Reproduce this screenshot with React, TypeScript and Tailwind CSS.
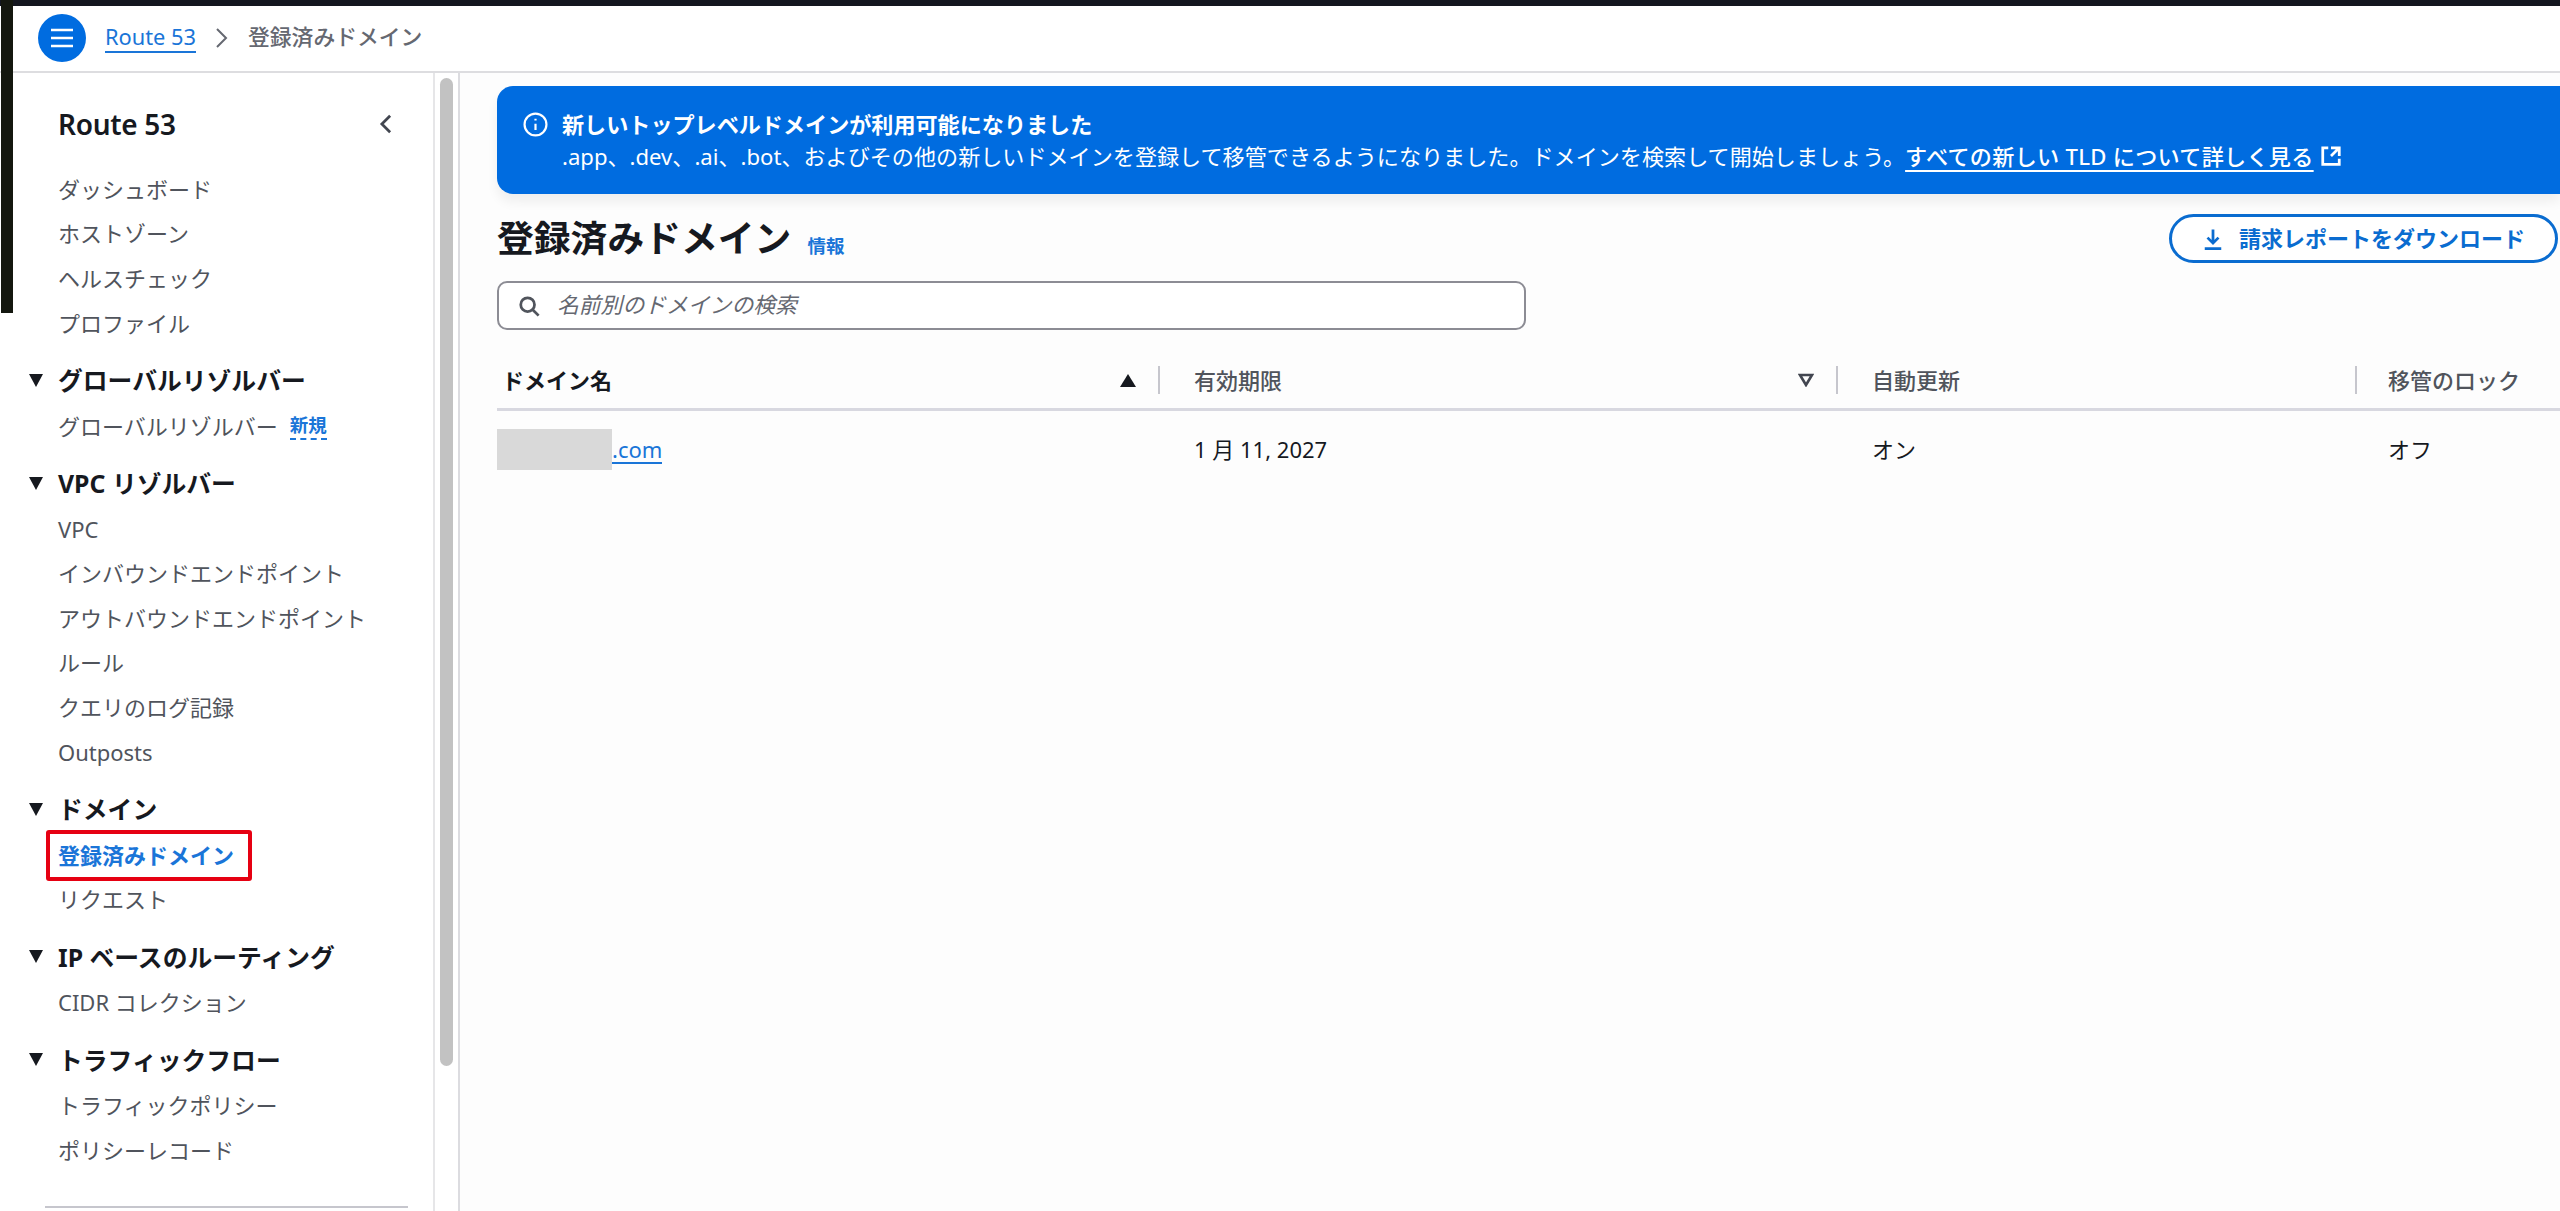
const FONT = "font-['Noto_Sans','Noto_Sans_CJK_JP',sans-serif]";

type NavItem = { label: string; badge?: string; active?: boolean };
type NavSection = { title: string; items: NavItem[] };

const topItems: NavItem[] = [
  { label: "ダッシュボード" },
  { label: "ホストゾーン" },
  { label: "ヘルスチェック" },
  { label: "プロファイル" },
];

const sections: NavSection[] = [
  { title: "グローバルリゾルバー", items: [{ label: "グローバルリゾルバー", badge: "新規" }] },
  {
    title: "VPC リゾルバー",
    items: [
      { label: "VPC" },
      { label: "インバウンドエンドポイント" },
      { label: "アウトバウンドエンドポイント" },
      { label: "ルール" },
      { label: "クエリのログ記録" },
      { label: "Outposts" },
    ],
  },
  {
    title: "ドメイン",
    items: [{ label: "登録済みドメイン", active: true }, { label: "リクエスト" }],
  },
  { title: "IP ベースのルーティング", items: [{ label: "CIDR コレクション" }] },
  {
    title: "トラフィックフロー",
    items: [{ label: "トラフィックポリシー" }, { label: "ポリシーレコード" }],
  },
];

function Item({ item }: { item: NavItem }) {
  if (item.active) {
    return (
      <div className="relative flex h-[44.6px] items-center pt-[1px] text-[22px] font-semibold text-[#1a75d8]">
        <span>{item.label}</span>
        {/* annotation drawn over the screenshot */}
        <span className="absolute left-[-12px] top-[-2px] h-[51px] w-[206px] rounded-[3px] border-[4px] border-[#e60012]" />
      </div>
    );
  }
  return (
    <div className="flex h-[44.6px] items-center pt-[1px] text-[22px] text-[#50545c]">
      <span>{item.label}</span>
      {item.badge && (
        <span className="ml-[12px] border-b-2 border-dashed border-[#1a75d8] text-[18.5px] font-bold leading-[26px] text-[#1a75d8]">
          {item.badge}
        </span>
      )}
    </div>
  );
}

function Sidebar() {
  return (
    <aside className="relative flex w-[435px] shrink-0 flex-col border-r-2 border-[#e6e6e8] bg-white pl-[58px] pr-[26px] pt-[30px]">
      <div className="flex h-[42px] items-center justify-between text-[28px] font-semibold tracking-[-0.3px] text-[#16191f]">
        <span>Route 53</span>
        <svg viewBox="0 0 16 16" className="mr-[10px] h-[22px] w-[22px] fill-none stroke-[#424650] stroke-2">
          <path d="M11 2 5 8l6 6" />
        </svg>
      </div>
      <div className="mt-[21.5px]">
        {topItems.map((it) => (
          <Item key={it.label} item={it} />
        ))}
      </div>
      {sections.map((s) => (
        <div key={s.title} className="mt-[13.8px]">
          <div className="relative flex h-[44.6px] items-center text-[24.8px] font-bold text-[#16191f]">
            <span className="absolute left-[-29px] top-[15px] h-0 w-0 border-x-[7.5px] border-t-[13px] border-x-transparent border-t-[#16191f]" />
            <span>{s.title}</span>
          </div>
          {s.items.map((it) => (
            <Item key={it.label} item={it} />
          ))}
        </div>
      ))}
      <div className="absolute bottom-[3px] left-[45px] h-[2px] w-[363px] bg-[#c6c6cd]" />
    </aside>
  );
}

function Banner() {
  return (
    <div className="flex h-[108px] gap-[14px] rounded-l-[16px] bg-[#006ce0] pl-[26px] pt-[24px] text-[22.1px] text-white shadow-[0_8px_12px_rgba(0,0,0,0.06)]">
      <svg viewBox="0 0 16 16" className="mt-[2px] h-[25px] w-[25px] fill-none stroke-white stroke-[1.4]">
        <circle cx="8" cy="8" r="7" />
        <path d="M8 11.5V7.5M8 5.5V4.3" />
      </svg>
      <div>
        <div className="h-[30px] font-bold leading-[28px]">新しいトップレベルドメインが利用可能になりました</div>
        <div className="flex items-center leading-[32px]">
          <span>.app、.dev、.ai、.bot、およびその他の新しいドメインを登録して移管できるようになりました。ドメインを検索して開始しましょう。</span>
          <span className="font-medium tracking-[0.3px] underline decoration-2 underline-offset-[5px]">すべての新しい TLD について詳しく見る</span>
          <svg viewBox="0 0 16 16" className="ml-[6px] h-[22px] w-[22px] fill-none stroke-white stroke-2">
            <path d="M14 8V2H8M14 2 8 8M6 2H2v12h12v-4" />
          </svg>
        </div>
      </div>
    </div>
  );
}

function HeaderCell({ label, strong, width, sort }: { label: string; strong?: boolean; width: string; sort?: "asc" | "desc" }) {
  return (
    <div className={`flex h-[28px] items-center justify-between text-[22px] ${width} ${strong ? "font-bold text-[#16191f]" : "font-medium text-[#50545c]"}`}>
      <span>{label}</span>
      {sort === "asc" && <span className="h-0 w-0 border-x-[8px] border-b-[13px] border-x-transparent border-b-[#16191f]" />}
      {sort === "desc" && (
        <svg viewBox="0 0 16 14" className="h-[14px] w-[16px] fill-none stroke-[#424650] stroke-[2.6]">
          <path d="M2 2h12L8 12Z" />
        </svg>
      )}
    </div>
  );
}

function DomainTable() {
  return (
    <div className="mt-[36px]">
      <div className="flex items-center border-b-[3px] border-[#d8d8e0] pb-[14px]">
        <div className="flex w-[663px] justify-between border-r-2 border-[#c6c6cd] pl-[5px] pr-[22px]">
          <HeaderCell label="ドメイン名" strong width="w-full" sort="asc" />
        </div>
        <div className="flex w-[678px] border-r-2 border-[#c6c6cd] pl-[34px] pr-[22px]">
          <HeaderCell label="有効期限" width="w-full" sort="desc" />
        </div>
        <div className="w-[519px] border-r-2 border-[#c6c6cd] pl-[34px]">
          <HeaderCell label="自動更新" width="w-full" />
        </div>
        <div className="pl-[31px]">
          <HeaderCell label="移管のロック" width="w-[140px]" />
        </div>
      </div>
      <div className="flex h-[77px] items-center text-[22px] text-[#16191f]">
        <div className="flex w-[663px] items-center">
          <span className="h-[41px] w-[115px] bg-[#d9d9d9]" />
          <span className="border-b-2 border-[#1a75d8] leading-[26px] text-[#1a75d8]">.com</span>
        </div>
        <div className="w-[678px] pl-[34px]">1 月 11, 2027</div>
        <div className="w-[519px] pl-[34px]">オン</div>
        <div className="pl-[31px]">オフ</div>
      </div>
    </div>
  );
}

export default function App() {
  return (
    <div className={`relative flex h-[1211px] w-[2560px] flex-col overflow-hidden bg-white ${FONT}`}>
      {/* screenshot edge: window behind the crop */}
      <div className="h-[6px] shrink-0 bg-[#14161f]" />
      <div className="absolute left-[1px] top-0 z-10 h-[313px] w-[12px] bg-[#14170f]" />

      <header className="flex h-[67px] shrink-0 items-center border-b-2 border-[#dddde0] pb-[2px] pl-[38px] text-[21.8px]">
        <span className="flex h-[48px] w-[48px] items-center justify-center rounded-full bg-[#006ce0]">
          <svg viewBox="0 0 24 20" className="h-[20px] w-[24px] stroke-white stroke-[2.4]">
            <path d="M1 2h22M1 10h22M1 18h22" />
          </svg>
        </span>
        <span className="ml-[19px] border-b-2 border-[#1a75d8] leading-[28px] text-[#1a75d8]">Route 53</span>
        <svg viewBox="0 0 12 20" className="ml-[20px] h-[20px] w-[12px] fill-none stroke-[#656871] stroke-2">
          <path d="M1 1l9 9-9 9" />
        </svg>
        <span className="ml-[20px] font-medium text-[#656871]">登録済みドメイン</span>
      </header>

      <div className="flex min-h-0 flex-1">
        <Sidebar />
        <div className="w-[25px] shrink-0 border-r-2 border-[#dcdce0] bg-white pl-[5px] pt-[5px]">
          <div className="h-[988px] w-[13px] rounded-full bg-[#c2c2c2]" />
        </div>
        <main className="min-w-0 flex-1 bg-[#fdfdfd] pl-[37px] pt-[13px]">
          <Banner />
          <div className="mt-[20px] flex items-start justify-between">
            <div className="flex items-end gap-[16px]">
              <h1 className="text-[36.8px] font-semibold leading-[48px] text-[#16191f]">登録済みドメイン</h1>
              <span className="pb-[2px] text-[18.5px] font-semibold text-[#1a75d8]">情報</span>
            </div>
            <button className="mr-[2px] flex h-[49px] w-[389px] items-center justify-center gap-[15px] rounded-full border-[3px] border-[#0a6cd0] bg-white text-[22px] font-semibold text-[#0a6cd0]">
              <svg viewBox="0 0 16 16" className="h-[22px] w-[22px] fill-none stroke-[#0a6cd0] stroke-2">
                <path d="M8 1v10M4 7l4 4 4-4M2 15h12" />
              </svg>
              <span>請求レポートをダウンロード</span>
            </button>
          </div>
          <div className="mt-[18px] flex h-[49px] w-[1029px] items-center gap-[17px] rounded-[10px] border-2 border-[#8c8c94] bg-white pl-[19px] text-[21.8px] italic text-[#656871]">
            <svg viewBox="0 0 16 16" className="h-[22px] w-[22px] fill-none stroke-[#50545c] stroke-2">
              <circle cx="7" cy="7" r="5" />
              <path d="M15 15l-4.5-4.5" />
            </svg>
            <span>名前別のドメインの検索</span>
          </div>
          <DomainTable />
        </main>
      </div>
    </div>
  );
}
